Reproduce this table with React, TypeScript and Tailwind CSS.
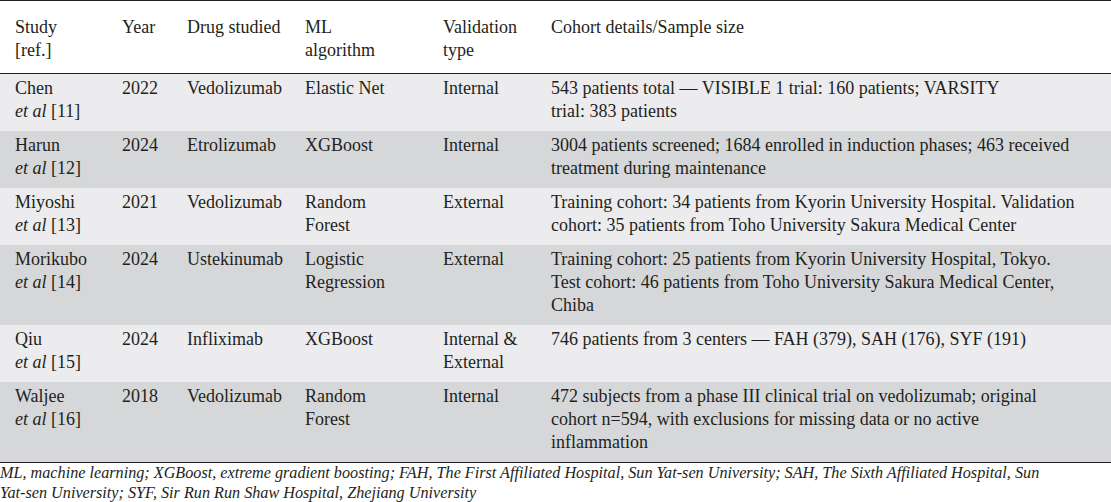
import React from "react";

type Row = {
  author: string;
  ref: string;
  year: string;
  drug: string;
  algo: string[];
  validation: string[];
  cohort: string[];
};

const rows: Row[] = [
  {
    author: "Chen",
    ref: "[11]",
    year: "2022",
    drug: "Vedolizumab",
    algo: ["Elastic Net"],
    validation: ["Internal"],
    cohort: [
      "543 patients total — VISIBLE 1 trial: 160 patients; VARSITY",
      "trial: 383 patients",
    ],
  },
  {
    author: "Harun",
    ref: "[12]",
    year: "2024",
    drug: "Etrolizumab",
    algo: ["XGBoost"],
    validation: ["Internal"],
    cohort: [
      "3004 patients screened; 1684 enrolled in induction phases; 463 received",
      "treatment during maintenance",
    ],
  },
  {
    author: "Miyoshi",
    ref: "[13]",
    year: "2021",
    drug: "Vedolizumab",
    algo: ["Random", "Forest"],
    validation: ["External"],
    cohort: [
      "Training cohort: 34 patients from Kyorin University Hospital. Validation",
      "cohort: 35 patients from Toho University Sakura Medical Center",
    ],
  },
  {
    author: "Morikubo",
    ref: "[14]",
    year: "2024",
    drug: "Ustekinumab",
    algo: ["Logistic", "Regression"],
    validation: ["External"],
    cohort: [
      "Training cohort: 25 patients from Kyorin University Hospital, Tokyo.",
      "Test cohort: 46 patients from Toho University Sakura Medical Center,",
      "Chiba",
    ],
  },
  {
    author: "Qiu",
    ref: "[15]",
    year: "2024",
    drug: "Infliximab",
    algo: ["XGBoost"],
    validation: ["Internal &", "External"],
    cohort: ["746 patients from 3 centers — FAH (379), SAH (176), SYF (191)"],
  },
  {
    author: "Waljee",
    ref: "[16]",
    year: "2018",
    drug: "Vedolizumab",
    algo: ["Random", "Forest"],
    validation: ["Internal"],
    cohort: [
      "472 subjects from a phase III clinical trial on vedolizumab; original",
      "cohort n=594, with exclusions for missing data or no active",
      "inflammation",
    ],
  },
];

function Lines({ lines }: { lines: string[] }) {
  return (
    <>
      {lines.map((l, i) => (
        <div key={i} className="whitespace-nowrap">
          {l}
        </div>
      ))}
    </>
  );
}

const cell = "pl-[15px] pt-[3px] pb-[8px] align-top";
const head = "pl-[15px] pt-[15px] pb-[11px] align-top font-normal text-left";

export default function App() {
  return (
    <div
      className="w-[1111px] bg-white text-[#231f20]"
      style={{ fontFamily: '"Liberation Serif", "Times New Roman", serif' }}
    >
      <table className="w-full table-fixed border-collapse text-[18px] leading-[23px]">
        <colgroup>
          <col className="w-[107px]" />
          <col className="w-[65px]" />
          <col className="w-[118px]" />
          <col className="w-[138px]" />
          <col className="w-[108px]" />
          <col />
        </colgroup>
        <thead>
          <tr className="border-t border-b border-[#231f20]">
            <th className={head}>
              <div>Study</div>
              <div>[ref.]</div>
            </th>
            <th className={head}>Year</th>
            <th className={head}>Drug studied</th>
            <th className={head}>
              <div>ML</div>
              <div>algorithm</div>
            </th>
            <th className={head}>
              <div>Validation</div>
              <div>type</div>
            </th>
            <th className={head}>Cohort details/Sample size</th>
          </tr>
        </thead>
        <tbody>
          {rows.map((r, i) => (
            <tr
              key={r.author}
              className={
                i % 2 === 0
                  ? "bg-[#ececee]"
                  : "bg-[#d6d7d9] " + (i === rows.length - 1 ? "border-b border-[#231f20]" : "")
              }
            >
              <td className={cell}>
                <div>{r.author}</div>
                <div>
                  <i>et al</i> {r.ref}
                </div>
              </td>
              <td className={cell}>{r.year}</td>
              <td className={cell}>{r.drug}</td>
              <td className={cell}>
                <Lines lines={r.algo} />
              </td>
              <td className={cell}>
                <Lines lines={r.validation} />
              </td>
              <td className={cell}>
                <Lines lines={r.cohort} />
              </td>
            </tr>
          ))}
        </tbody>
      </table>
      <p className="text-[16.2px] leading-[20px] italic">
        ML, machine learning; XGBoost, extreme gradient boosting; FAH, The First Affiliated Hospital, Sun
        Yat-sen University; SAH, The Sixth Affiliated Hospital, Sun
        <br />
        Yat-sen University; SYF, Sir Run Run Shaw Hospital, Zhejiang University
      </p>
    </div>
  );
}
